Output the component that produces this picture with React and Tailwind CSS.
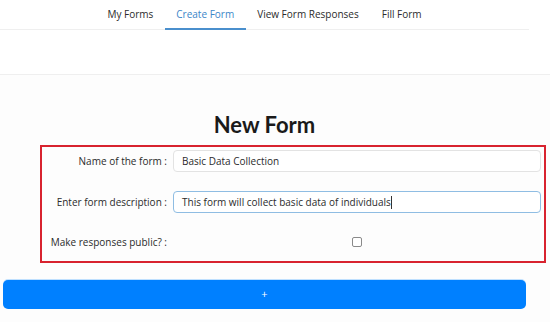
export default function App() {
  const font = { fontFamily: '"Open Sans", sans-serif' };
  return (
    <div className="w-[550px] h-[323px] bg-white overflow-hidden text-[#2b2b2b]" style={font}>
      <div className="w-[529px]">
        <nav className="h-[30px] border-b border-[#efefef] flex justify-center items-stretch text-[10px]">
          <div className="flex items-center px-[11.5px]">My Forms</div>
          <div className="flex items-center px-[11.5px] text-[#3b86c8] border-b-2 border-[#4a8fcd] mb-[-1px]">Create Form</div>
          <div className="flex items-center px-[11.5px]">View Form Responses</div>
          <div className="flex items-center px-[11.5px]">Fill Form</div>
        </nav>
      </div>
      <div className="h-[45px] border-b border-[#efefef]"></div>
      <div className="bg-[#fdfdfd] h-[247px]">
        <div className="w-[529px] pt-[36px]">
          <h1 className="text-center text-[22px] leading-[28px] font-bold text-[#1a1a1a]" style={{ fontFamily: 'Lato, sans-serif' }}>New Form</h1>
        </div>
        <div className="ml-[40px] mt-[6px] w-[506px] h-[118px] border-2 border-[#d8232f] pt-[3px] text-[10px]">
          <div className="grid grid-cols-[125px_368px] gap-x-[6px] items-center">
            <div className="text-right whitespace-nowrap">Name of the form :</div>
            <div className="h-[22px] border border-[#e3e3e3] rounded-[4px] bg-white flex items-center px-[8px]">Basic Data Collection</div>
            <div className="h-[19px] col-span-2"></div>
            <div className="text-right whitespace-nowrap">Enter form description :</div>
            <div className="h-[22px] border border-[#8fbde3] rounded-[4px] bg-white flex items-center px-[8px]">
              This form will collect basic data of individuals<span className="inline-block w-px h-[13px] bg-[#333]"></span>
            </div>
            <div className="h-[18px] col-span-2"></div>
            <div className="text-right whitespace-nowrap">Make responses public? :</div>
            <div className="h-[22px] flex items-center pl-[179px]">
              <div className="w-[10px] h-[10px] border border-[#8a8a8a] rounded-[2px] bg-white"></div>
            </div>
          </div>
        </div>
        <div className="w-[529px] mt-[17px] px-[3px]">
          <div className="h-[29px] rounded-[5px] bg-[#0080ff] text-white flex items-center justify-center text-[11px] shadow-[0_-1px_0_#bfe0ff]">+</div>
        </div>
      </div>
    </div>
  );
}
